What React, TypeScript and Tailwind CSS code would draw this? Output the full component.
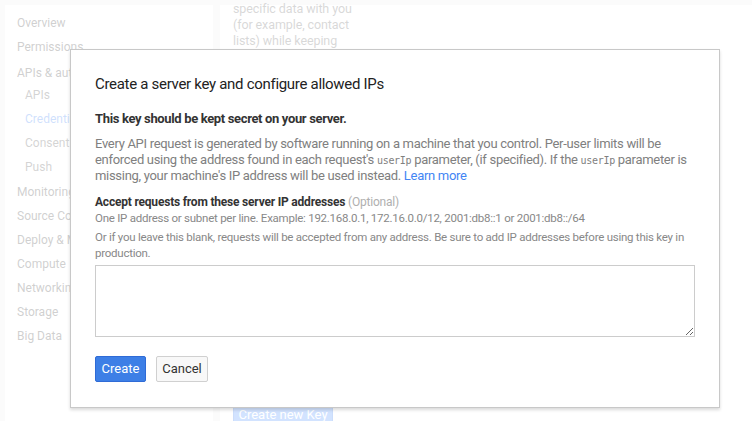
import React from "react";

const navItems: { label: string; sub?: boolean; active?: boolean; extra?: string }[] = [
  { label: "Overview" },
  { label: "Permissions" },
  { label: "APIs & auth", extra: "leading-[28px]" },
  { label: "APIs", sub: true },
  { label: "Credentials", sub: true, active: true },
  { label: "Consent screen", sub: true },
  { label: "Push", sub: true },
  { label: "Monitoring", extra: "mt-[1px]" },
  { label: "Source Code" },
  { label: "Deploy & Manage" },
  { label: "Compute" },
  { label: "Networking" },
  { label: "Storage" },
  { label: "Big Data" },
];

const mono = { fontFamily: "'DejaVu Sans Mono', 'Liberation Mono', monospace" };

export default function App() {
  return (
    <div
      className="relative h-[421px] w-[752px] overflow-hidden bg-[#eeeeee]"
      style={{ fontFamily: "Roboto, 'Liberation Sans', sans-serif" }}
    >
      {/* Page underneath */}
      <div className="flex h-full gap-[7px] pl-[5px] pt-[5px]">
        <aside className="h-full w-[208px] bg-white pl-[12px] pt-[6px]">
          <ul className="flex flex-col">
            {navItems.map((it) => (
              <li
                key={it.label}
                className={`h-[24px] whitespace-nowrap text-[12px] ${it.extra ?? ""} ${
                  it.extra === "leading-[28px]" ? "" : "leading-[24px]"
                } ${it.sub ? "pl-[8px]" : ""} ${
                  it.active ? "text-[#4285f4]" : it.sub ? "text-[#555555]" : "text-[#444444]"
                }`}
              >
                {it.label}
              </li>
            ))}
          </ul>
        </aside>
        <main className="flex h-full flex-1 flex-col bg-white pl-[13px]">
          <p className="-mt-[4px] w-[122px] text-[12.5px] leading-[16px] tracking-[-0.1px] text-[#666666]">
            specific data with you (for example, contact lists) while keeping their usernames,
            passwords, and other information private.
          </p>
          <div className="mt-auto mb-[-8px]">
            <button className="h-[29px] w-[100px] rounded-[2px] border border-[#3079ed] bg-[#4d90fe] text-[13px] text-white">
              Create new Key
            </button>
          </div>
        </main>
      </div>

      {/* Overlay */}
      <div className="absolute inset-0 bg-white/75" />

      {/* Dialog */}
      <div className="absolute left-[70px] top-[49px] w-[650px] border border-[#c8c8c8] bg-white px-[24px] pb-[25px] pt-[24px] shadow-[0_2px_3px_rgba(0,0,0,0.15)]">
        <h2 className="text-[15px] leading-[20px] tracking-[-0.3px] text-[#222222]">
          Create a server key and configure allowed IPs
        </h2>
        <p className="mt-[17px] text-[13px] font-bold leading-[16px] tracking-[-0.35px] text-[#333333]">
          This key should be kept secret on your server.
        </p>
        <p className="mt-[9px] text-[13px] leading-[16px] tracking-[-0.3px] text-[#808080]">
          Every API request is generated by software running on a machine that you control. Per-user
          limits will be enforced using the address found in each request's{" "}
          <code className="text-[10px] leading-none tracking-[-0.3px]" style={mono}>userIp</code> parameter, (if specified). If the{" "}
          <code className="text-[10px] leading-none tracking-[-0.3px]" style={mono}>userIp</code> parameter is missing, your machine's IP address will be used instead.{" "}
          <a className="text-[#4285f4]">Learn more</a>
        </p>
        <p className="mt-[10px] text-[12px] font-bold leading-[16px] tracking-[-0.2px] text-[#333333]">
          Accept requests from these server IP addresses{" "}
          <span className="font-normal text-[#b0b0b0]">(Optional)</span>
        </p>
        <p className="text-[11.5px] leading-[16px] tracking-[-0.25px] text-[#888888]">
          One IP address or subnet per line. Example: 192.168.0.1, 172.16.0.0/12, 2001:db8::1 or
          2001:db8::/64
        </p>
        <p className="mt-[3px] text-[11.5px] leading-[16px] tracking-[-0.25px] text-[#888888]">
          Or if you leave this blank, requests will be accepted from any address. Be sure to add IP
          addresses before using this key in production.
        </p>
        <textarea className="mt-[4px] block h-[72px] w-[600px] border border-[#cccccc] bg-white" />
        <div className="mt-[19px] flex gap-[10px]">
          <button className="h-[26px] w-[51px] rounded-[2px] border border-[#2f6bd6] bg-[#3d7fe6] text-[13px] text-white">
            Create
          </button>
          <button className="h-[26px] w-[52px] rounded-[2px] border border-[#d0d0d0] bg-[#f8f8f8] text-[13px] text-[#333333]">
            Cancel
          </button>
        </div>
      </div>
    </div>
  );
}
